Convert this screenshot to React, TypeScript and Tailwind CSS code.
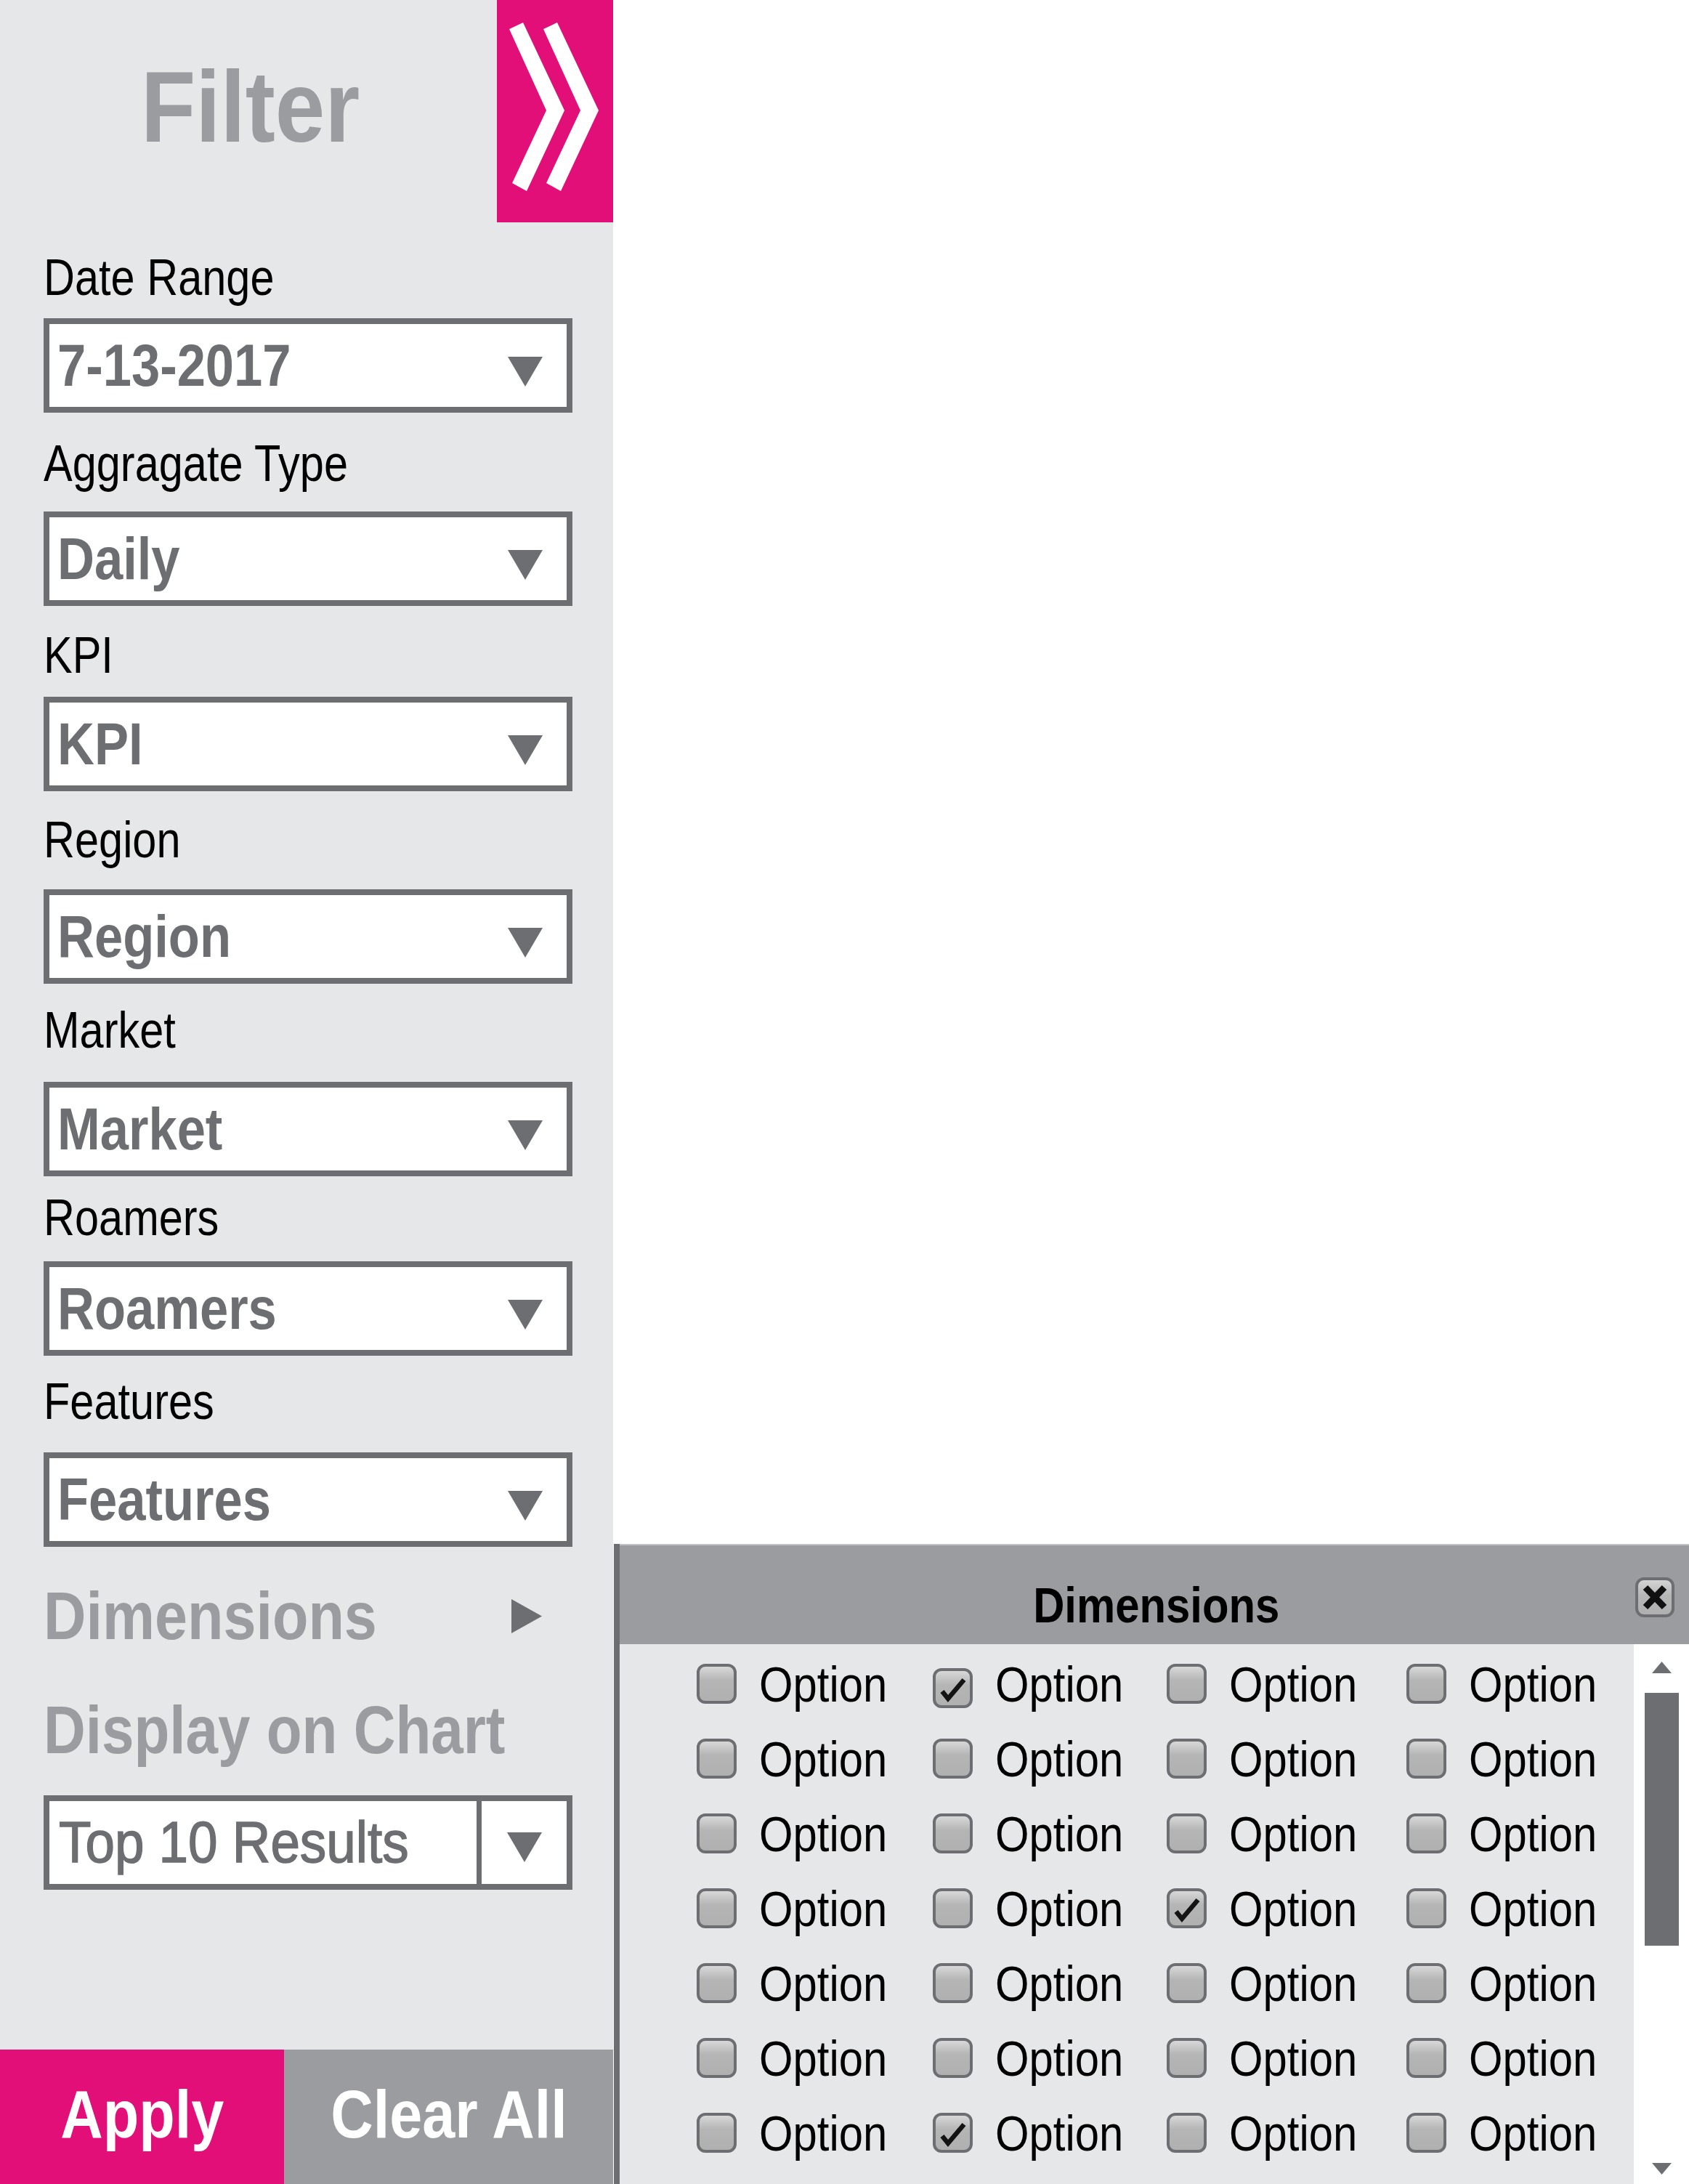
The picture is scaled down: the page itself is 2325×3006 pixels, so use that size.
import React from "react";

const fields = [
  { label: "Date Range", value: "7-13-2017", labelMt: "mt-[41px]", boxMt: "mt-[21px]" },
  { label: "Aggragate Type", value: "Daily", labelMt: "mt-[35px]", boxMt: "mt-[31px]" },
  { label: "KPI", value: "KPI", labelMt: "mt-[33px]", boxMt: "mt-[22px]" },
  { label: "Region", value: "Region", labelMt: "mt-[32px]", boxMt: "mt-[33px]" },
  { label: "Market", value: "Market", labelMt: "mt-[29px]", boxMt: "mt-[36px]" },
  { label: "Roamers", value: "Roamers", labelMt: "mt-[22px]", boxMt: "mt-[25px]" },
  { label: "Features", value: "Features", labelMt: "mt-[28px]", boxMt: "mt-[35px]" },
];

const checkedCells = new Set(["0-1", "3-2", "6-1"]);

function DownTri({ className = "" }: { className?: string }) {
  return (
    <svg width="48" height="41" viewBox="0 0 48 41" className={`shrink-0 ${className}`}>
      <polygon points="0,0 48,0 24,41" fill="#6d6e71" />
    </svg>
  );
}

function CheckBox({ checked, className = "" }: { checked?: boolean; className?: string }) {
  return (
    <div
      className={`flex h-[55px] w-[55px] shrink-0 items-center justify-center rounded-[12px] border-[4px] border-[#6d6e71] bg-linear-to-b from-[#d8d8d8] via-[#b5b5b5] via-40% to-[#b0b0b0] ${className}`}
    >
      {checked && (
        <svg width="47" height="47" viewBox="0 0 47 47">
          <path d="M9 28 L17 38 L39 12" fill="none" stroke="#141414" strokeWidth="6.5" />
        </svg>
      )}
    </div>
  );
}

export default function App() {
  return (
    <div className="flex h-[3006px] w-[2325px] overflow-hidden bg-white font-['Liberation_Sans',Arial,sans-serif]">
      {/* Left filter panel */}
      <div className="flex h-full w-[844px] shrink-0 flex-col bg-[#e6e7e8]">
        <div className="flex h-[306px] shrink-0">
          <div className="flex-1 pl-[194px] pt-[77px]">
            <span className="inline-block origin-left scale-x-[0.88] text-[140px] font-bold leading-none text-[#9b9ca0]">
              Filter
            </span>
          </div>
          <div className="h-[306px] w-[160px] bg-[#e10f77]">
            <svg width="160" height="306" viewBox="0 0 160 306">
              <polygon points="17,40 36,31 93,152 41,263 21,252 68,152" fill="#ffffff" />
              <polygon points="64,40 83,31 140,152 88,263 68,252 115,152" fill="#ffffff" />
            </svg>
          </div>
        </div>

        <div className="flex flex-col px-[60px]">
          {fields.map((f) => (
            <React.Fragment key={f.label}>
              <div className={`${f.labelMt} h-[70px] whitespace-nowrap text-[70px] leading-none text-black`}>
                <span className="inline-block origin-left scale-x-[0.85]">{f.label}</span>
              </div>
              <div
                className={`${f.boxMt} flex h-[130px] w-[728px] items-center border-[8px] border-[#6d6e71] bg-white pl-[11px] pr-[33px]`}
              >
                <div className="flex-1 whitespace-nowrap">
                  <span className="inline-block origin-left scale-x-[0.86] text-[82px] font-bold leading-none text-[#6d6e71]">
                    {f.value}
                  </span>
                </div>
                <DownTri className="mt-[16px]" />
              </div>
            </React.Fragment>
          ))}

          <div className="mt-[49px] flex h-[92px] w-[728px] items-center pr-[42px]">
            <div className="flex-1 whitespace-nowrap">
              <span className="inline-block origin-left scale-x-[0.88] text-[92px] font-bold leading-none text-[#9b9ca0]">
                Dimensions
              </span>
            </div>
            <svg width="42" height="47" viewBox="0 0 42 47" className="shrink-0">
              <polygon points="0,0 42,23.5 0,47" fill="#6d6e71" />
            </svg>
          </div>

          <div className="mt-[65px] h-[93px] whitespace-nowrap">
            <span className="inline-block origin-left scale-x-[0.86] text-[93px] font-bold leading-none text-[#9b9ca0]">
              Display on Chart
            </span>
          </div>

          <div className="mt-[43px] flex h-[130px] w-[728px] border-[8px] border-[#6d6e71] bg-white">
            <div className="flex flex-1 items-center whitespace-nowrap pl-[13px]">
              <span className="inline-block origin-left scale-x-[0.91] text-[80px] leading-none text-[#6d6e71] [-webkit-text-stroke:1.5px_#6d6e71]">
                Top 10 Results
              </span>
            </div>
            <div className="flex w-[124px] items-center justify-center border-l-[7px] border-[#6d6e71]">
              <DownTri className="mt-[13px]" />
            </div>
          </div>
        </div>

        <div className="mt-auto flex h-[185px] shrink-0">
          <div className="flex w-[391px] items-center justify-center bg-[#e10f77] pb-[8px]">
            <span className="inline-block scale-x-[0.88] text-[92px] font-bold leading-none text-white">Apply</span>
          </div>
          <div className="flex flex-1 items-center justify-center bg-[#9b9ca0] pb-[8px]">
            <span className="inline-block whitespace-nowrap scale-x-[0.88] text-[92px] font-bold leading-none text-white">
              Clear All
            </span>
          </div>
        </div>
      </div>

      {/* Right area with dimensions popup */}
      <div className="ml-[1px] flex min-w-0 flex-1 flex-col justify-end">
        <div className="flex h-[881px] flex-col border-l-[8px] border-[#6d6e71] bg-[#e6e7e8]">
          <div className="grid h-[138px] shrink-0 grid-cols-[1fr_auto_1fr] items-start border-t-[2px] border-[#c4c5c7] bg-[#9b9ca0]">
            <div />
            <div className="pl-[6px] pt-[48px]">
              <span className="inline-block scale-x-[0.88] text-[68px] font-bold leading-none text-black">Dimensions</span>
            </div>
            <div className="justify-self-end pr-[20px] pt-[44px]">
              <div className="flex h-[55px] w-[54px] items-center justify-center rounded-[12px] border-[4px] border-[#6d6e71] bg-linear-to-b from-[#d4d4d4] via-[#b6b6b6] via-45% to-[#b0b0b0]">
                <svg width="46" height="47" viewBox="0 0 46 47">
                  <line x1="10" y1="10" x2="36" y2="37" stroke="#111" strokeWidth="9" />
                  <line x1="36" y1="10" x2="10" y2="37" stroke="#111" strokeWidth="9" />
                </svg>
              </div>
            </div>
          </div>

          <div className="flex min-w-0 flex-1">
            <div className="min-w-0 flex-1 pl-[106px] pt-[3px]">
              <div className="grid grid-cols-[325px_322px_330px_1fr] auto-rows-[103px]">
                {Array.from({ length: 7 }).map((_, r) =>
                  Array.from({ length: 4 }).map((__, c) => (
                    <div key={`${r}-${c}`} className="flex items-center gap-[31px]">
                      <CheckBox
                        checked={checkedCells.has(`${r}-${c}`)}
                        className={r === 0 && c === 1 ? "mt-[12px]" : ""}
                      />
                      <span className="inline-block origin-left scale-x-[0.88] whitespace-nowrap text-[68px] leading-none text-black">
                        Option
                      </span>
                    </div>
                  ))
                )}
              </div>
            </div>
            <div className="flex w-[76px] shrink-0 flex-col items-center bg-white pb-[13px] pt-[24px]">
              <svg width="27" height="16" viewBox="0 0 27 16">
                <polygon points="13.5,0 27,16 0,16" fill="#6d6e71" />
              </svg>
              <div className="mt-[27px] h-[348px] w-[47px] bg-[#6d6e71]" />
              <div className="flex-1" />
              <svg width="27" height="16" viewBox="0 0 27 16">
                <polygon points="0,0 27,0 13.5,16" fill="#6d6e71" />
              </svg>
            </div>
          </div>
        </div>
      </div>
    </div>
  );
}
